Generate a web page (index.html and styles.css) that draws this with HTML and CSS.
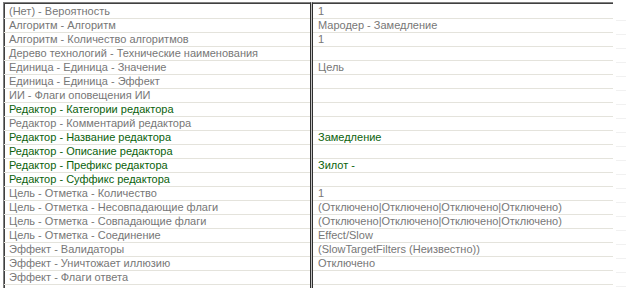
FILE: index.html
```html
<!DOCTYPE html>
<html lang="ru">
<head>
<meta charset="utf-8">
<title>Свойства</title>
<link rel="stylesheet" href="styles.css">
</head>
<body>
<div class="view">
  <div class="panel names">
    <div class="row">(Нет) - Вероятность</div>
    <div class="row">Алгоритм - Алгоритм</div>
    <div class="row">Алгоритм - Количество алгоритмов</div>
    <div class="row">Дерево технологий - Технические наименования</div>
    <div class="row">Единица - Единица - Значение</div>
    <div class="row">Единица - Единица - Эффект</div>
    <div class="row">ИИ - Флаги оповещения ИИ</div>
    <div class="row set">Редактор - Категории редактора</div>
    <div class="row">Редактор - Комментарий редактора</div>
    <div class="row set">Редактор - Название редактора</div>
    <div class="row set">Редактор - Описание редактора</div>
    <div class="row set">Редактор - Префикс редактора</div>
    <div class="row set">Редактор - Суффикс редактора</div>
    <div class="row">Цель - Отметка - Количество</div>
    <div class="row">Цель - Отметка - Несовпадающие флаги</div>
    <div class="row">Цель - Отметка - Совпадающие флаги</div>
    <div class="row">Цель - Отметка - Соединение</div>
    <div class="row">Эффект - Валидаторы</div>
    <div class="row">Эффект - Уничтожает иллюзию</div>
    <div class="row">Эффект - Флаги ответа</div>
  </div>
  <div class="splitter"></div>
  <div class="panel values">
    <div class="row">1</div>
    <div class="row">Мародер - Замедление</div>
    <div class="row">1</div>
    <div class="row"></div>
    <div class="row">Цель</div>
    <div class="row"></div>
    <div class="row"></div>
    <div class="row"></div>
    <div class="row"></div>
    <div class="row set">Замедление</div>
    <div class="row"></div>
    <div class="row set">Зилот -</div>
    <div class="row"></div>
    <div class="row">1</div>
    <div class="row">(Отключено|Отключено|Отключено|Отключено)</div>
    <div class="row">(Отключено|Отключено|Отключено|Отключено)</div>
    <div class="row">Effect/Slow</div>
    <div class="row">(SlowTargetFilters (Неизвестно))</div>
    <div class="row">Отключено</div>
    <div class="row"></div>
  </div>
  <div class="ghost">
    <div class="grow"></div><div class="grow"></div><div class="grow"></div><div class="grow"></div>
    <div class="grow"></div><div class="grow"></div><div class="grow"></div><div class="grow"></div>
    <div class="grow"></div><div class="grow"></div><div class="grow"></div><div class="grow"></div>
    <div class="grow"></div><div class="grow"></div><div class="grow"></div><div class="grow"></div>
    <div class="grow"></div><div class="grow"></div><div class="grow"></div><div class="grow"></div>
  </div>
</div>
</body>
</html>
```

FILE: styles.css
```css
html, body {
  margin: 0;
  padding: 0;
  background: #ffffff;
  overflow: hidden;
}

.view {
  display: flex;
  align-items: flex-start;
  padding: 2px 0 0 3px;
  height: 286px;
  font-family: "Liberation Sans", Arial, sans-serif;
  font-size: 11px;
  color: #777777;
}

.panel {
  box-sizing: border-box;
  height: 290px;
  padding-top: 2px;
  border-top: 1px solid #808080;
  box-shadow: inset 0 1px 0 #404040;
  background: #ffffff;
}

.names {
  width: 308px;
  border-left: 1px solid #808080;
  border-right: 1px solid #303030;
  box-shadow: inset 1px 1px 0 #404040;
}

.splitter {
  width: 1px;
  height: 290px;
  background: #c4c4c4;
}

.values {
  width: 301px;
  border-left: 1px solid #303030;
}

.row {
  height: 12px;
  line-height: 12px;
  padding: 0 0 1px 5px;
  border-bottom: 1px solid #e4e3dc;
  white-space: nowrap;
  overflow: hidden;
}

.set {
  color: #0b620b;
}

.ghost {
  width: 10px;
  margin-left: 3px;
  padding-top: 5px;
}

.grow {
  height: 13px;
  border-bottom: 1px solid #f1f1f1;
}
```
